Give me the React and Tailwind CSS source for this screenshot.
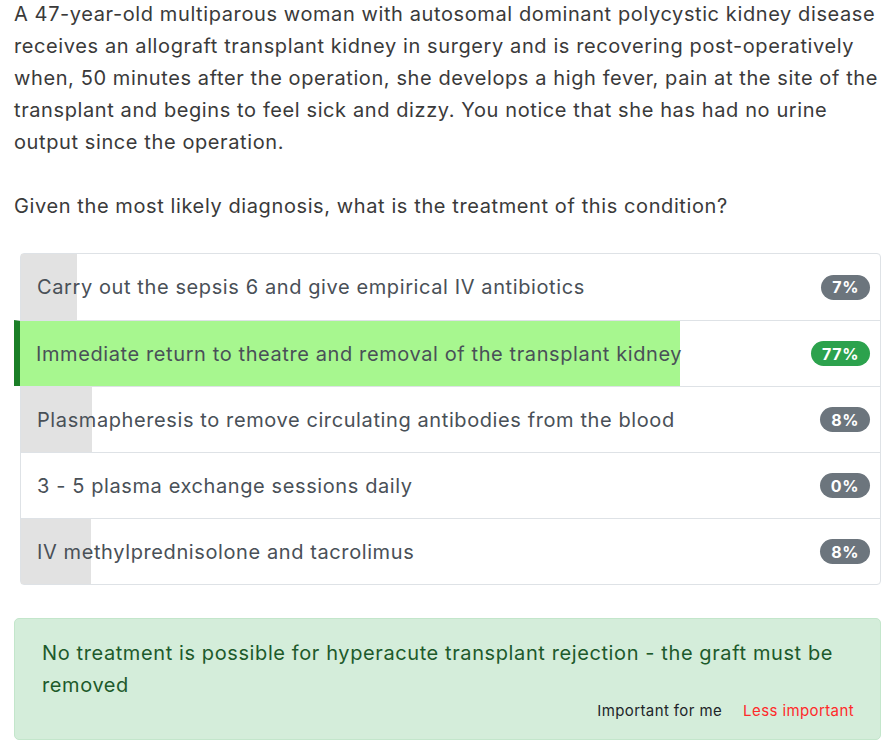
import React from "react";

const options = [
  { text: "Carry out the sepsis 6 and give empirical IV antibiotics", pct: 7, bar: 6.5 },
  { text: "Immediate return to theatre and removal of the transplant kidney", pct: 77, bar: 76.8, correct: true },
  { text: "Plasmapheresis to remove circulating antibodies from the blood", pct: 8, bar: 8.3 },
  { text: "3 - 5 plasma exchange sessions daily", pct: 0, bar: 0 },
  { text: "IV methylprednisolone and tacrolimus", pct: 8, bar: 8.1 },
];

export default function App() {
  return (
    <div
      className="bg-white w-[894px] h-[754px] overflow-hidden pl-[14px] pr-[13px]"
      style={{ fontFamily: "Inter, 'Noto Sans', sans-serif" }}
    >
      <p className="text-[20px] leading-[32px] tracking-[0.6px] text-[#3a3a3a] -mt-[2px]">
        A 47-year-old multiparous woman with autosomal dominant polycystic kidney disease receives an allograft transplant kidney in surgery and is recovering post-operatively when, 50 minutes after the operation, she develops a high fever, pain at the site of the transplant and begins to feel sick and dizzy. You notice that she has had no urine output since the operation.
      </p>
      <p className="text-[20px] leading-[32px] tracking-[0.6px] text-[#3a3a3a] mt-[32px]">
        Given the most likely diagnosis, what is the treatment of this condition?
      </p>

      <div className="mt-[31px] ml-[6px] border border-[#dee2e6] rounded-[4px]">
        {options.map((o, i) => (
          <div
            key={i}
            className={
              "relative h-[66px] flex items-center " +
              (i > 0 ? "border-t border-[#dee2e6] " : "") +
              (o.correct ? "-ml-[7px] border-l-[6px] border-l-[#1b7f27]" : "")
            }
          >
            <div
              className={
                "absolute left-0 top-0 bottom-0 " +
                (o.correct ? "bg-[#a7f78f]" : "bg-[#e2e2e2]")
              }
              style={{ width: `${o.bar}%` }}
            />
            <span className="relative pl-[16px] text-[20px] tracking-[0.6px] text-[#495057]">
              {o.text}
            </span>
            <span
              className={
                "relative ml-auto mr-[10px] h-[25px] px-[11px] rounded-full flex items-center text-white text-[16px] tracking-[0.6px] font-bold " +
                (o.correct ? "bg-[#2ca24d]" : "bg-[#6c757d]")
              }
            >
              {o.pct}%
            </span>
          </div>
        ))}
      </div>

      <div className="mt-[33px] bg-[#d4edda] border border-[#c3e6cb] rounded-[5px] pl-[27px] pr-[20px] pt-[18px] pb-[18px]">
        <p className="text-[20px] leading-[32px] tracking-[0.6px] text-[#1d5a2b]">
          No treatment is possible for hyperacute transplant rejection - the graft must be removed
        </p>
        <div className="flex justify-end gap-[21px] text-[15px] leading-[20px] tracking-[0.4px] pr-[6px]">
          <span className="text-[#212529]">Important for me</span>
          <span className="text-[#ff2a2a]">Less important</span>
        </div>
      </div>
    </div>
  );
}
